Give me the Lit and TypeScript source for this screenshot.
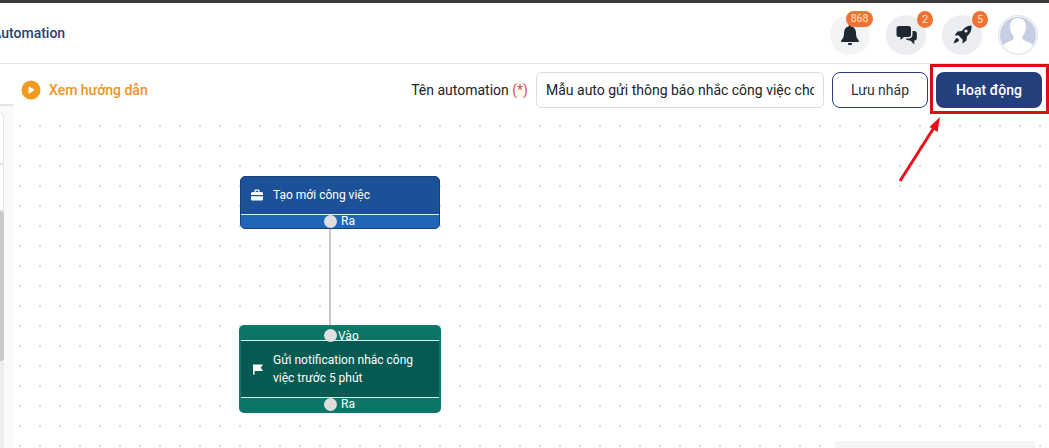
import { LitElement, html, css } from "lit";
import { customElement } from "lit/decorators.js";

@customElement("app-root")
export class AppRoot extends LitElement {
  static styles = css`
    :host { display: block; width: 1049px; height: 448px; overflow: hidden; position: relative; background: #fff;
      font-family: Roboto, "Noto Sans", sans-serif; color: #222; }
    .topline { height: 3px; background: #3a3a3a; }
    .header { height: 60px; border-bottom: 1px solid #e4e4e4; display: flex; align-items: center; justify-content: space-between; padding: 0 11px 0 0; }
    .crumb { font-size: 14px; font-weight: 500; color: #2b4170; margin-left: -8px; white-space: nowrap; }
    .actions { display: flex; gap: 16px; align-items: center; padding-top: 4px; }
    .circle { width: 40px; height: 40px; border-radius: 50%; background: #ecedf0; display: flex; align-items: center; justify-content: center; position: relative; }
    .circle.light { background: #f3f4f6; }
    .badge { position: absolute; top: -4px; right: -7px; width: 16px; height: 17px; border-radius: 50%; background: #f07230; color: #fde6d8; font-size: 11px; line-height: 17px; text-align: center; }
    .badge.near { right: -6px; }
    .badge.wide { right: -3px; width: 27px; height: 16px; line-height: 16px; border-radius: 8px; font-size: 10.5px; }
    .toolbar { height: 48px; display: flex; align-items: center; padding: 3px 7px 0 21px; box-sizing: border-box; }
    .guide { display: flex; align-items: center; gap: 8px; color: #f0922b; font-size: 14px; font-weight: 500; }
    .spacer { flex: 1; }
    .label { font-size: 14px; margin-right: 8px; }
    .label span { color: #d9534f; }
    .input { width: 288px; height: 36px; box-sizing: border-box; border: 1px solid #dcdcdc; border-radius: 6px; padding: 0 9px; display: flex; align-items: center; font-size: 14px; white-space: nowrap; overflow: hidden; margin-right: 8px; }
    .input div { width: 100%; overflow: hidden; }
    .btn { height: 36px; border-radius: 8px; box-sizing: border-box; display: flex; align-items: center; justify-content: center; font-size: 14px; font-weight: 500; }
    .btn.out { width: 96px; border: 1px solid #23407c; background: #fff; color: #333; font-weight: 400; margin-right: 8px; }
    .btn.fill { width: 106px; background: #233f7c; color: #fff; }
    .canvas { position: absolute; left: 0; right: 0; top: 115px; bottom: 0;
      background-image: radial-gradient(circle at center, #dddddd 1.2px, transparent 1.3px); background-size: 20px 20px; background-position: 10px 1px; }
    .side { position: absolute; left: 0; top: 104px; bottom: 0; width: 13px; background: #f8f9fb; border-top: 2px solid #e3e3e3; box-sizing: border-box; display: flex; flex-direction: column; }
    .side-box { margin-top: 7px; width: 4px; height: 98px; box-sizing: border-box; background: #fff; border: 1px solid #e6e6ea; border-left: 0; border-radius: 0 4px 0 0; display: flex; flex-direction: column; }
    .side-box div { height: 49px; border-bottom: 2px solid #e6e6ea; }
    .thumb { width: 4px; height: 150px; background: #c9c9c9; border-radius: 0 3px 3px 0; }
    .track { width: 4px; flex: 1; background: #eeeeee; }
    .graybox { position: absolute; left: 835px; top: 326px; width: 200px; height: 7px; background: #f5f5f5; }
    .node { position: absolute; width: 200px; box-sizing: border-box; border-radius: 5px; color: #fff; font-size: 12px; overflow: hidden; }
    .node.blue { left: 240px; top: 61px; background: #1c5197; border: 1px solid #173f78; }
    .node.green { left: 239px; top: 210px; width: 202px; background: #055b52; border: 2px solid #0b7a6b; }
    .body { display: flex; align-items: center; gap: 10px; padding: 0 10px; }
    .blue .body { height: 35px; padding-bottom: 2px; }
    .green .body { height: 56px; line-height: 18px; padding-right: 20px; padding-left: 11px; gap: 9px; }
    .port { height: 13px; display: grid; grid-template-columns: 83px 13px 1fr; align-items: center; border-top: 1px solid #dfeaf5; font-size: 12px; line-height: 13px; }
    .port span:last-child { padding-left: 4px; }
    .blue .port { background: #1f66bb; }
    .green .port { background: #0b7667; border-color: #d5efe8; }
    .green .port.in { border-top: 0; border-bottom: 1px solid #d5efe8; }
    .green .port.in span:last-child { padding-left: 1px; padding-top: 3px; }
    .dot { grid-column: 2; width: 13px; height: 13px; border-radius: 50%; background: #dedede; }
    .wire { position: absolute; left: 329px; top: 114px; width: 2px; height: 96px; background: #c8c8c8; }
    .redbox { position: absolute; left: 930px; top: 64px; width: 119px; height: 50px; box-sizing: border-box; border: 3px solid #d90f17; }
    .arrow { position: absolute; left: 890px; top: 110px; }
  `;

  render() {
    return html`
      <div class="topline"></div>
      <div class="header">
        <div class="crumb">Automation</div>
        <div class="actions">
          <div class="circle light">
            <svg width="18" height="21" viewBox="0 0 18 21"><path fill="#1f2733" d="M9 0a1.500 1.500 0 0 1 1.500 1.600C13.600 2.300 15 5 15 8c0 4 1 5.500 2.800 7.500V17H.2v-1.500C2 13.500 3 12 3 8c0-3 1.400-5.700 4.500-6.400A1.500 1.500 0 0 1 9 0zM6.800 18h4.400a2.200 2.200 0 0 1-4.400 0z"/></svg>
            <div class="badge wide">868</div>
          </div>
          <div class="circle">
            <svg width="21" height="19" viewBox="0 0 21 19"><path fill="#1f2733" d="M3 0h9.500A2.500 2.500 0 0 1 15 2.500v6a2.500 2.500 0 0 1-2.500 2.500H8l-3.500 3v-3H3A2.500 2.500 0 0 1 .5 8.500v-6A2.500 2.500 0 0 1 3 0z"/><path fill="#1f2733" d="M16.500 5h1.800A2.500 2.500 0 0 1 20.800 7.500v4.500a2.500 2.500 0 0 1-2.500 2.500v4l-4-4c-2 0-3.800-.5-4.800-2h3c2.500 0 4-1.500 4-4z"/></svg>
            <div class="badge">2</div>
          </div>
          <div class="circle">
            <svg width="20" height="20" viewBox="0 0 20 20"><path fill="#1f2733" d="M19.500.5c.4 4.500-1 8-4.500 10.700l-.5 4.300-4 3 .2-3.800-4.400-4.400-3.800.2 3-4 4.300-.5C12.500 2.500 15.500.2 19.500.5zM14 4.400a1.600 1.600 0 1 0 0 3.200 1.600 1.600 0 0 0 0-3.200zM4.500 13c1.500 0 2.500 1 2.500 2.500-1 1.500-3 2-5.500 3 1-2.500 1.500-4.500 3-5.500z"/></svg>
            <div class="badge near">5</div>
          </div>
          <div class="circle">
            <svg width="40" height="40" viewBox="0 0 40 40"><defs><clipPath id="av"><circle cx="20" cy="20" r="18"/></clipPath></defs><circle cx="20" cy="20" r="19.500" fill="#f5f6f9" stroke="#e4e6ec"/><g clip-path="url(#av)"><rect width="40" height="40" fill="#c5cfe1"/><path fill="#fff" d="M20 3c5.500 0 8 4 8 9 0 3.500-1.500 7-3.500 9v3c2 2.500 8 3 10 6v12H5.500V30c2-3 8-3.500 10-6v-3c-2-2-3.500-5.500-3.500-9 0-5 2.500-9 8-9z"/></g></svg>
          </div>
        </div>
      </div>
      <div class="toolbar">
        <div class="guide">
          <svg width="20" height="20" viewBox="0 0 20 20"><circle cx="10" cy="10" r="9.500" fill="#f39a1f"/><path fill="#fff" stroke="#fff" stroke-linejoin="round" d="M8 6.800l5 3.200-5 3.200z"/></svg>
          Xem hướng dẫn
        </div>
        <div class="spacer"></div>
        <div class="label">Tên automation <span>(*)</span></div>
        <div class="input"><div>Mẫu auto gửi thông báo nhắc công việc cho</div></div>
        <div class="btn out">Lưu nháp</div>
        <div class="btn fill">Hoạt động</div>
      </div>
      <div class="canvas">
        <div class="graybox"></div>
        <div class="wire"></div>
        <div class="node blue">
          <div class="body">
            <svg width="12" height="12" viewBox="0 0 12 12" style="flex:none"><path fill="#fff" d="M3.500 3V1.800C3.500 1 4 .5 4.800.5h2.400C8 .5 8.500 1 8.500 1.800V3h1.800c1 0 1.500.5 1.700 1.500V6H0V4.500C.2 3.500.7 3 1.700 3zM4.700 3h2.600V1.800H4.700zM0 7.200h12V10c0 1-.6 1.500-1.500 1.500h-9C.6 11.500 0 11 0 10z"/></svg>
            Tạo mới công việc
          </div>
          <div class="port"><span class="dot"></span><span>Ra</span></div>
        </div>
        <div class="node green">
          <div class="port in"><span class="dot"></span><span>Vào</span></div>
          <div class="body">
            <svg width="12" height="11" viewBox="0 0 12 11" style="flex:none"><path fill="#fff" d="M1 .5h10L8.800 3.800 11 7H2.600V10.500H1z"/></svg>
            <span>Gửi notification nhắc công việc trước 5 phút</span>
          </div>
          <div class="port"><span class="dot"></span><span>Ra</span></div>
        </div>
      </div>
      <div class="side">
        <div class="side-box"><div></div></div>
        <div class="thumb"></div>
        <div class="track"></div>
      </div>
      <div class="redbox"></div>
      <svg class="arrow" width="60" height="80" viewBox="0 0 60 80"><path d="M10 71L45 16" stroke="#e8101a" stroke-width="3" fill="none"/><path d="M50 7L39.500 17l8 5z" fill="#e8101a"/></svg>
    `;
  }
}
